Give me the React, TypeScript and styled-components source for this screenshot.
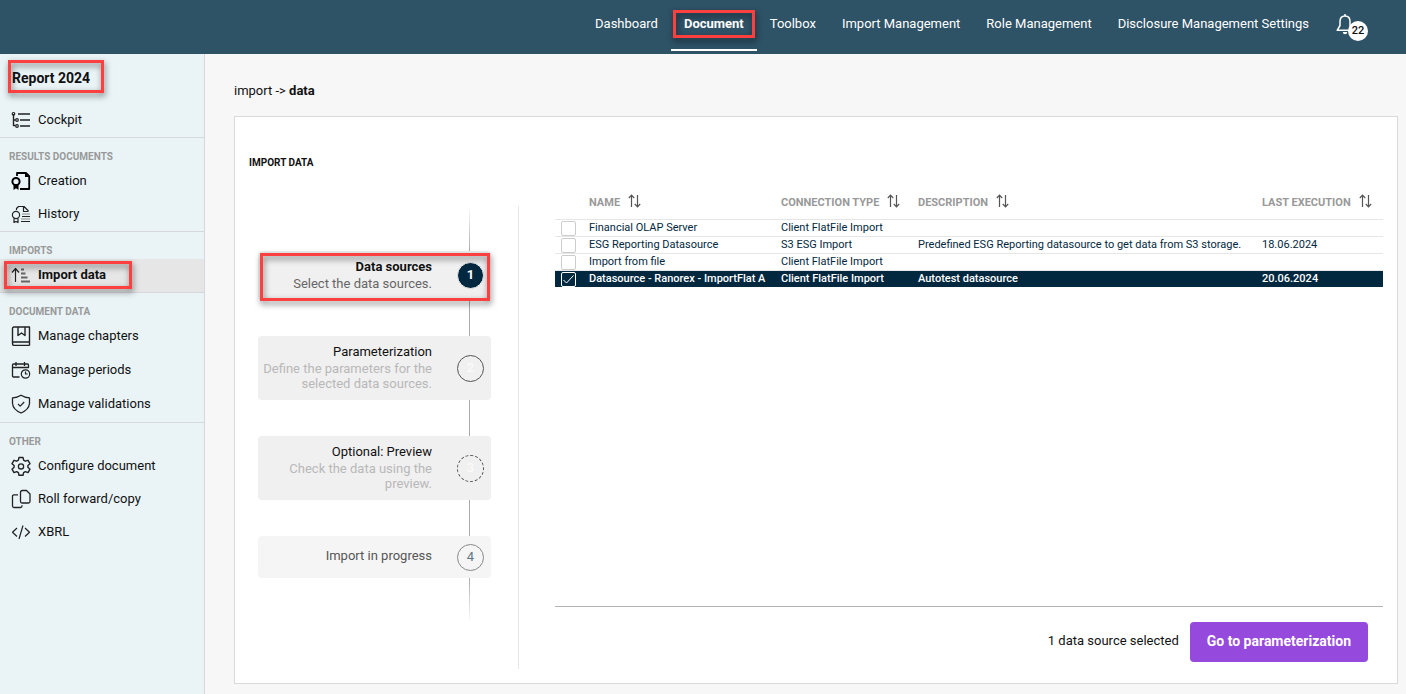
import React from "react";
import styled, { createGlobalStyle, css } from "styled-components";

const GlobalStyle = createGlobalStyle`
  * { box-sizing: border-box; }
  body {
    margin: 0;
    background: #f7f7f7;
    color: #111;
    font-family: Roboto, "Liberation Sans", sans-serif;
    font-size: 13px;
    line-height: 18px;
  }
  a { color: inherit; text-decoration: none; }
  button { font: inherit; }
`;

const Page = styled.div`
  display: flex;
  flex-direction: column;
  min-height: 100vh;
`;

/* Red call-out frame laid over the element it marks */
const Callout = styled.span<{ $inset: string }>`
  position: absolute;
  inset: ${(p) => p.$inset};
  border: 3px solid #fc4040;
  filter: drop-shadow(1px 3px 3px rgba(0, 0, 0, 0.55));
  pointer-events: none;
`;

const TopBar = styled.header`
  display: flex;
  justify-content: flex-end;
  align-items: flex-start;
  height: 54px;
  padding-right: 37px;
  background: #2e5266;
  color: #fff;
`;

const TopNav = styled.nav`
  display: flex;
`;

const TopLink = styled.a<{ $active?: boolean }>`
  position: relative;
  height: 51px;
  padding: 15px 13px 0;
  font-weight: ${(p) => (p.$active ? 700 : 400)};
  border-bottom: 2px solid ${(p) => (p.$active ? "#fff" : "transparent")};
  white-space: nowrap;
`;

const BellButton = styled.button`
  position: relative;
  display: flex;
  align-items: flex-start;
  width: 33px;
  height: 28px;
  margin: 13px 0 0 14px;
  padding: 0;
  border: 0;
  background: none;
  color: #fff;
`;

const Badge = styled.span`
  position: absolute;
  right: 1px;
  bottom: 0;
  width: 20px;
  height: 20px;
  border-radius: 50%;
  background: #fff;
  color: #111;
  font-size: 11px;
  font-weight: 500;
  line-height: 20px;
  text-align: center;
`;

const Body = styled.div`
  display: flex;
  flex: 1;
`;

const Sidebar = styled.aside`
  flex: none;
  width: 205px;
  background: #eaf4f7;
  border-right: 1px solid #d5d8dc;
`;

const ReportTitle = styled.h1`
  position: relative;
  margin: 0;
  padding: 15px 12px 17px;
  font-size: 14px;
  line-height: 18px;
  font-weight: 700;
`;

const Group = styled.section`
  border-bottom: 1px solid #d5d8dc;
  &:last-child { border-bottom: 0; }
`;

const GroupLabel = styled.h2`
  margin: 0;
  padding: 13px 9px 2px;
  color: #999;
  font-size: 10px;
  line-height: 12px;
  font-weight: 700;
`;

const SideLink = styled.a<{ $active?: boolean; $roomy?: boolean }>`
  position: relative;
  display: flex;
  align-items: center;
  gap: 7px;
  height: ${(p) => (p.$roomy ? 34 : 33)}px;
  padding: 0 11px 2px;
  font-weight: ${(p) => (p.$active ? 700 : 400)};
  ${(p) => p.$active && css`background: #e6e6e6;`}
  svg { flex: none; }
`;

const Main = styled.main`
  display: flex;
  flex-direction: column;
  flex: 1;
  min-width: 0;
  padding: 28px 8px 10px 29px;
`;

const Breadcrumb = styled.div`
  margin-bottom: 16px;
  strong { font-weight: 700; }
`;

const Panel = styled.section`
  display: flex;
  flex-direction: column;
  flex: 1;
  padding: 39px 14px 14px;
  background: #fff;
  border: 1px solid #d9d9d9;
`;

const PanelTitle = styled.h2`
  margin: 0 0 20px;
  font-size: 10px;
  line-height: 14px;
  font-weight: 700;
`;

const PanelBody = styled.div`
  display: flex;
  flex: 1;
`;

const Stepper = styled.ol`
  flex: none;
  width: 270px;
  margin: 16px 0 0;
  padding: 0 27px 0 9px;
  list-style: none;
  border-right: 1px solid #e6e6e6;
`;

const Connector = styled.li<{ $fade?: "in" | "out" }>`
  width: 1px;
  height: ${(p) => (p.$fade ? 45 : 36)}px;
  margin-left: 211px;
  background: ${(p) =>
    p.$fade === "in"
      ? "linear-gradient(#fff, #aaa)"
      : p.$fade === "out"
      ? "linear-gradient(#aaa, #fff)"
      : "#aaa"};
`;

const StepCard = styled.li<{ $muted?: boolean }>`
  position: relative;
  display: flex;
  align-items: center;
  justify-content: flex-end;
  gap: 25px;
  min-height: 42px;
  padding: 7px;
  border-radius: 4px;
  background: ${(p) => (p.$muted ? "#f5f5f5" : "#f0f0f0")};
`;

const StepText = styled.div`
  flex: none;
  width: 173px;
  padding-bottom: 2px;
  text-align: right;
`;

const StepTitle = styled.div<{ $tone?: "bold" | "soft" }>`
  color: ${(p) => (p.$tone === "soft" ? "#555" : "#111")};
  font-weight: ${(p) => (p.$tone === "bold" ? 700 : 400)};
`;

const StepHint = styled.div<{ $current?: boolean }>`
  color: ${(p) => (p.$current ? "#666" : "#b8b8b8")};
  line-height: 15px;
`;

const circleStyles = {
  current: css`background: #022840; color: #fff; font-weight: 700; border-color: #f0f0f0;`,
  next: css`border-color: #555; color: #fafafa;`,
  optional: css`border-color: #555; border-style: dashed; color: #fafafa;`,
  last: css`border-color: #888; color: #5c7585; font-weight: 400;`,
};

const StepCircle = styled.span<{ $kind: keyof typeof circleStyles }>`
  flex: none;
  width: 27px;
  height: 27px;
  border: 1px solid;
  border-radius: 50%;
  font-weight: 500;
  line-height: 24px;
  text-align: center;
  ${(p) => circleStyles[p.$kind]}
`;

const Content = styled.div`
  display: flex;
  flex-direction: column;
  flex: 1;
  min-width: 0;
  margin-left: 36px;
`;

const TableArea = styled.div`
  flex: 1;
  padding-bottom: 8px;
  border-bottom: 1px solid #b3b3b3;
`;

const SourceTable = styled.table`
  width: 100%;
  border-collapse: collapse;
  table-layout: fixed;
  font-size: 11px;
  line-height: 14px;
`;

const HeadCell = styled.th<{ $width?: number }>`
  width: ${(p) => (p.$width ? p.$width + "px" : "auto")};
  height: 29px;
  padding: 6px 0 0;
  color: #999;
  font-weight: 700;
  text-align: left;
  vertical-align: top;
`;

const SortButton = styled.button`
  display: flex;
  align-items: center;
  gap: 8px;
  height: 14px;
  padding: 0;
  border: 0;
  background: none;
  color: inherit;
  white-space: nowrap;
  svg { margin-bottom: 4px; }
`;

const Row = styled.tr<{ $selected?: boolean }>`
  height: 17px;
  border-top: 1px solid #e6e6e6;
  color: #022840;
  ${(p) => p.$selected && css`background: #022840; color: #fff; font-weight: 500;`}
`;

const Cell = styled.td`
  padding: 1px 0;
  white-space: nowrap;
`;

const Check = styled.input`
  appearance: none;
  display: block;
  width: 15px;
  height: 15px;
  margin: 0 0 -1px 6px;
  border: 1px solid #ccc;
  border-radius: 2px;
  background: #fff;
  &:checked {
    border-color: #fff;
    background: #022840
      url("data:image/svg+xml,%3Csvg xmlns='http://www.w3.org/2000/svg' viewBox='0 0 13 13'%3E%3Cpath d='M1.5 7l3 3 7-7.5' fill='none' stroke='white'/%3E%3C/svg%3E")
      center / 13px 13px no-repeat;
  }
`;

const Footer = styled.footer`
  display: flex;
  align-items: center;
  justify-content: flex-end;
  gap: 11px;
  padding: 15px 15px 7px 0;
`;

const SelectionCount = styled.span`
  padding-bottom: 2px;
`;

const PrimaryButton = styled.button`
  height: 40px;
  padding: 0 17px 2px;
  border: 0;
  border-radius: 4px;
  background: #9549dd;
  color: #fff;
  font-size: 14px;
  font-weight: 700;
`;

type IconProps = { children: React.ReactNode; size?: number };
const Icon = ({ children, size = 20 }: IconProps) => (
  <svg width={size} height={size} viewBox="0 0 20 20" fill="none" stroke="#222" strokeWidth="1.2" strokeLinejoin="round" aria-hidden="true">
    {children}
  </svg>
);

const icons = {
  cockpit: (
    <Icon>
      <path d="M2.500 4v11.500h2M2.500 10h2M7 4h12M9 10h10M9 16h10" strokeWidth="1.400" />
      <circle cx="2.500" cy="3.800" r="1.300" />
      <circle cx="6" cy="10" r="1.300" />
      <circle cx="6" cy="16" r="1.300" />
    </Icon>
  ),
  creation: (
    <Icon>
      <path d="M6 5V2h9l3.200 3.200V18H9" stroke="#000" strokeWidth="1.800" />
      <path d="M14 1.500V6h4.500z" fill="#000" stroke="none" />
      <circle cx="5" cy="10.500" r="3.600" stroke="#000" strokeWidth="2" />
      <path d="M2.500 13v6l2.500-1.800L7.500 19v-6l-2.500 1.500z" fill="#000" stroke="none" />
    </Icon>
  ),
  history: (
    <Icon>
      <path d="M5.500 6V4.500L7.500 2.500H13l4.500 4.500M12.500 3v4.500h5" />
      <circle cx="5" cy="11" r="3.600" />
      <path d="M3 14.500v4l2-1 2 1v-4M11 12.500h8M10 17.500h9" />
      <path d="M11 10h8M10 15h9" stroke="#888" />
    </Icon>
  ),
  importData: (
    <Icon>
      <path d="M4.500 17V4M1 7.500L4.500 3.500 8 7.500" />
      <path d="M10 4.500h3M10 8.500h4.500M10 12.500h6.500M10 16.500h9" stroke="#666" strokeWidth="1.800" />
    </Icon>
  ),
  chapters: (
    <Icon>
      <path d="M18.500 16V1H3Q1.500 1 1.500 2.500V17.500Q1.500 19.400 3 19.400H18.500M18.500 16H3Q1.500 16 1.500 17.500M18.500 16v3.400M7 1v8.500L10.500 7l3.500 2.500V1" strokeWidth="1.400" />
    </Icon>
  ),
  periods: (
    <Icon>
      <path d="M8.500 17H2.500Q1.500 17 1.500 16V5Q1.500 4 2.500 4H16.500Q17.500 4 17.500 5V7.500H1.500M5 2v4M13.500 2v4" strokeWidth="1.300" />
      <circle cx="14.500" cy="14" r="4.200" />
      <path d="M14.500 11.500V14h2.200" />
    </Icon>
  ),
  validations: (
    <Icon>
      <path d="M10 1.200Q14 3.800 18.500 3.800V9.500Q18 15.500 10 19Q2 15.500 1.500 9.500V3.800Q6 3.800 10 1.200Z" strokeWidth="1.300" />
      <path d="M7 10l2.200 2.200L13.200 8" />
    </Icon>
  ),
  configure: (
    <Icon>
      <path
        d="M8 1.500h4l.6 2.700 1.700 1 2.700-.9 2 3.400-2.100 1.800v1.800l2.100 1.900-2 3.400-2.700-.9-1.700 1-.6 2.600H8l-.6-2.600-1.700-1-2.700.9-2-3.400 2.100-1.900V9.500L1 7.700l2-3.400 2.700.9 1.700-1z"
        strokeWidth="1.400"
      />
      <circle cx="10" cy="10.400" r="2.600" strokeWidth="1.300" />
    </Icon>
  ),
  copy: (
    <Icon>
      <path d="M11.500 1.500h4l3.500 3.500v7.500Q19 14 17.500 14H11Q9.500 14 9.500 12.500V3.500Q9.500 1.500 11.500 1.500ZM7 5.800H3Q1.500 5.800 1.500 7.300V17Q1.500 18.500 3 18.500h6.500Q11 18.500 11 17v-.7" strokeWidth="1.300" />
    </Icon>
  ),
  xbrl: (
    <Icon>
      <path d="M6 6l-4.500 4.200L6 14.500M14 6l4.500 4.200L14 14.500M12 3.500L8 17" />
    </Icon>
  ),
};

const SortIcon = () => (
  <svg width="13" height="14" viewBox="0 0 13 14" fill="none" stroke="#555" strokeWidth="1.200" aria-hidden="true">
    <path d="M3.500 13V1.200M.8 4L3.500 1.200 6.200 4" />
    <path d="M9.500 1v11.800M6.800 10l2.700 2.800 2.700-2.800" />
  </svg>
);

const BellIcon = () => (
  <svg width="20" height="22" viewBox="0 0 20 22" fill="none" stroke="#fff" strokeWidth="1.500" aria-hidden="true">
    <path d="M9 3C5.500 3 4 5.500 4 8.500V12.500L1.200 17.300H16.800L14 12.500V8.500C14 5.500 12.500 3 9 3Z" strokeLinejoin="round" />
    <path d="M9 1v2" />
    <path d="M6.800 19h4.400a2.200 2.200 0 0 1-4.400 0z" fill="#fff" stroke="none" />
  </svg>
);

const topLinks = ["Dashboard", "Document", "Toolbox", "Import Management", "Role Management", "Disclosure Management Settings"];

type SideItem = [string, keyof typeof icons];
const groups: { label?: string; roomy?: boolean; items: SideItem[] }[] = [
  { items: [["Cockpit", "cockpit"]] },
  { label: "RESULTS DOCUMENTS", items: [["Creation", "creation"], ["History", "history"]] },
  { label: "IMPORTS", items: [["Import data", "importData"]] },
  {
    label: "DOCUMENT DATA",
    roomy: true,
    items: [["Manage chapters", "chapters"], ["Manage periods", "periods"], ["Manage validations", "validations"]],
  },
  {
    label: "OTHER",
    items: [["Configure document", "configure"], ["Roll forward/copy", "copy"], ["XBRL", "xbrl"]],
  },
];

const columns: [string, number | undefined][] = [
  ["NAME", 192],
  ["CONNECTION TYPE", 137],
  ["DESCRIPTION", undefined],
  ["LAST EXECUTION", 121],
];

const sources = [
  ["Financial OLAP Server", "Client FlatFile Import", "", ""],
  ["ESG Reporting Datasource", "S3 ESG Import", "Predefined ESG Reporting datasource to get data from S3 storage.", "18.06.2024"],
  ["Import from file", "Client FlatFile Import", "", ""],
  ["Datasource - Ranorex - ImportFlat A", "Client FlatFile Import", "Autotest datasource", "20.06.2024"],
];

export default function App() {
  const [selected, setSelected] = React.useState(3);
  return (
    <Page>
      <GlobalStyle />
      <TopBar>
        <TopNav>
          {topLinks.map((label) => (
            <TopLink href="#" key={label} $active={label === "Document"}>
              {label}
              {label === "Document" && <Callout $inset="10px 2px 11px" />}
            </TopLink>
          ))}
        </TopNav>
        <BellButton aria-label="Notifications">
          <BellIcon />
          <Badge>22</Badge>
        </BellButton>
      </TopBar>
      <Body>
        <Sidebar>
          <ReportTitle>
            Report 2024
            <Callout $inset="6px 100px 11px 8px" />
          </ReportTitle>
          {groups.map((group, index) => (
            <Group key={index}>
              {group.label && <GroupLabel>{group.label}</GroupLabel>}
              {group.items.map(([label, icon]) => (
                <SideLink href="#" key={label} $active={label === "Import data"} $roomy={group.roomy}>
                  {icons[icon]}
                  {label}
                  {label === "Import data" && <Callout $inset="2px 72px 3px 4px" />}
                </SideLink>
              ))}
            </Group>
          ))}
        </Sidebar>
        <Main>
          <Breadcrumb>
            import -&gt; <strong>data</strong>
          </Breadcrumb>
          <Panel>
            <PanelTitle>IMPORT DATA</PanelTitle>
            <PanelBody>
              <Stepper>
                <Connector $fade="in" aria-hidden="true" />
                <StepCard>
                  <StepText>
                    <StepTitle $tone="bold">Data sources</StepTitle>
                    <StepHint $current>Select the data sources.</StepHint>
                  </StepText>
                  <StepCircle $kind="current">1</StepCircle>
                  <Callout $inset="2px 1px -1px 2px" />
                </StepCard>
                <Connector aria-hidden="true" />
                <StepCard>
                  <StepText>
                    <StepTitle>Parameterization</StepTitle>
                    <StepHint>Define the parameters for the selected data sources.</StepHint>
                  </StepText>
                  <StepCircle $kind="next">2</StepCircle>
                </StepCard>
                <Connector aria-hidden="true" />
                <StepCard>
                  <StepText>
                    <StepTitle>Optional: Preview</StepTitle>
                    <StepHint>Check the data using the preview.</StepHint>
                  </StepText>
                  <StepCircle $kind="optional">3</StepCircle>
                </StepCard>
                <Connector aria-hidden="true" />
                <StepCard $muted>
                  <StepText>
                    <StepTitle $tone="soft">Import in progress</StepTitle>
                  </StepText>
                  <StepCircle $kind="last">4</StepCircle>
                </StepCard>
                <Connector $fade="out" aria-hidden="true" />
              </Stepper>
              <Content>
                <TableArea>
                  <SourceTable>
                    <thead>
                      <tr>
                        <HeadCell $width={34} aria-label="Selection" />
                        {columns.map(([label, width]) => (
                          <HeadCell key={label} $width={width}>
                            <SortButton>
                              {label}
                              <SortIcon />
                            </SortButton>
                          </HeadCell>
                        ))}
                      </tr>
                    </thead>
                    <tbody>
                      {sources.map((cells, index) => (
                        <Row key={cells[0]} $selected={index === selected}>
                          <Cell>
                            <Check
                              type="checkbox"
                              aria-label={cells[0]}
                              checked={index === selected}
                              onChange={() => setSelected(index)}
                            />
                          </Cell>
                          {cells.map((text, column) => (
                            <Cell key={column}>{text}</Cell>
                          ))}
                        </Row>
                      ))}
                    </tbody>
                  </SourceTable>
                </TableArea>
                <Footer>
                  <SelectionCount>1 data source selected</SelectionCount>
                  <PrimaryButton>Go to parameterization</PrimaryButton>
                </Footer>
              </Content>
            </PanelBody>
          </Panel>
        </Main>
      </Body>
    </Page>
  );
}
